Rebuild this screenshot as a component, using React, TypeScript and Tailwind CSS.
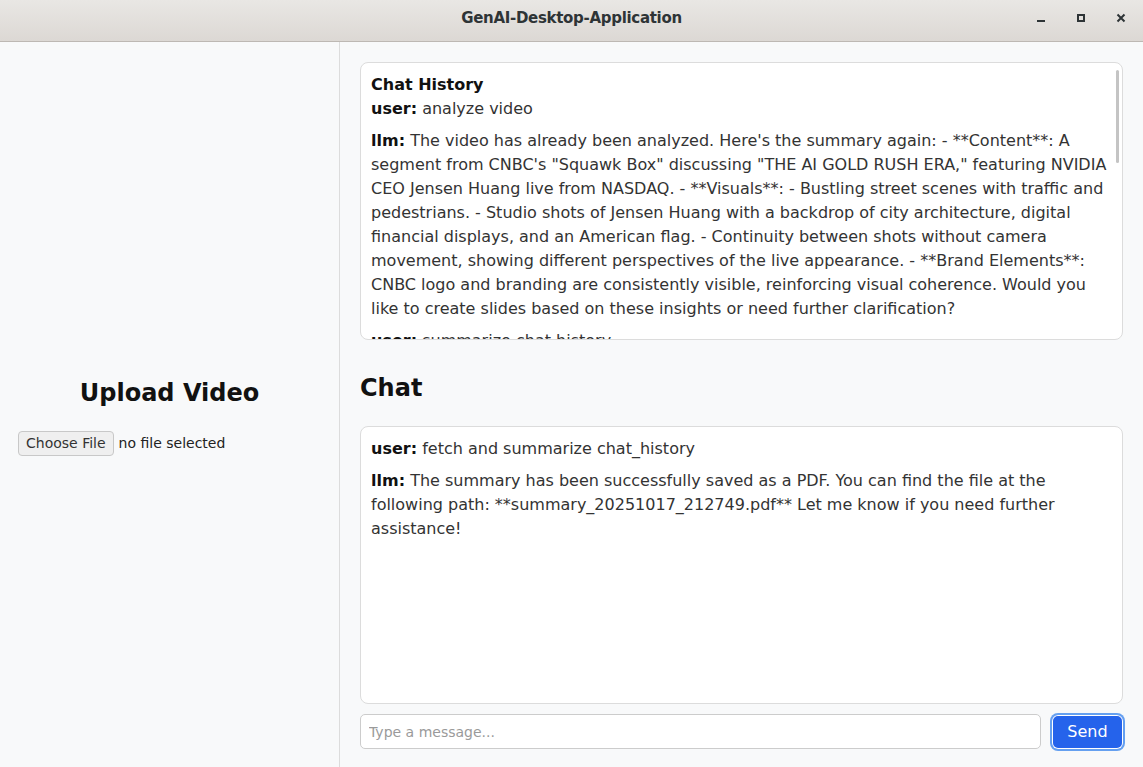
import React from 'react'

export default function App() {
  const history = [
    { role: 'user', text: 'analyze video' },
    {
      role: 'llm',
      text: 'The video has already been analyzed. Here\'s the summary again: - **Content**: A segment from CNBC\'s "Squawk Box" discussing "THE AI GOLD RUSH ERA," featuring NVIDIA CEO Jensen Huang live from NASDAQ. - **Visuals**: - Bustling street scenes with traffic and pedestrians. - Studio shots of Jensen Huang with a backdrop of city architecture, digital financial displays, and an American flag. - Continuity between shots without camera movement, showing different perspectives of the live appearance. - **Brand Elements**: CNBC logo and branding are consistently visible, reinforcing visual coherence. Would you like to create slides based on these insights or need further clarification?',
    },
    { role: 'user', text: 'summarize chat history' },
  ]

  const chat = [
    { role: 'user', text: 'fetch and summarize chat_history' },
    {
      role: 'llm',
      text: 'The summary has been successfully saved as a PDF. You can find the file at the following path: **summary_20251017_212749.pdf** Let me know if you need further assistance!',
    },
  ]

  return (
    <div className="w-[1143px] h-[767px] flex flex-col overflow-hidden font-['DejaVu_Sans',sans-serif] text-[#333]">
      {/* Title bar */}
      <div className="relative h-[42px] shrink-0 flex items-center justify-center pb-[4px] bg-gradient-to-b from-[#e9e7e4] to-[#dcd8d4] border-b border-[#bdb8b3]">
        <span className="text-[15px] font-bold text-[#2e3436] tracking-[-0.3px]">GenAI-Desktop-Application</span>
        <div className="absolute right-[2px] top-0 h-[35px] flex items-center">
          <button className="w-10 h-full flex items-center justify-center">
            <span className="block w-[8px] h-[2px] bg-[#2e3436] mt-[6px]" />
          </button>
          <button className="w-10 h-full flex items-center justify-center">
            <span className="block w-[8px] h-[8px] border-2 border-[#2e3436]" />
          </button>
          <button className="w-10 h-full flex items-center justify-center">
            <svg width="10" height="10" viewBox="0 0 10 10">
              <path d="M1.5 1.5 L8.5 8.5 M8.5 1.5 L1.5 8.5" stroke="#2e3436" strokeWidth="2" />
            </svg>
          </button>
        </div>
      </div>

      <div className="flex flex-1 min-h-0 bg-[#f8f9fa]">
        {/* Left panel */}
        <div className="w-[340px] shrink-0 border-r border-[#dcdcdc] flex flex-col justify-center px-[18px] pt-[26px]">
          <h2 className="text-center text-[24px] font-bold text-[#111] leading-[29px] mb-[23px]">Upload Video</h2>
          <div className="flex items-center gap-[5px] text-[14px]">
            <button className="h-[25px] px-[7px] rounded-[4px] border border-[#c8c8c8] bg-[#efefef] text-[#333]">Choose File</button>
            <span className="text-[#222]">no file selected</span>
          </div>
        </div>

        {/* Right panel */}
        <div className="flex-1 flex flex-col px-[20px] pt-[20px] pb-[18px] min-w-0">
          <div className="relative h-[278px] shrink-0 bg-white border border-[#dcdcdc] rounded-[8px] overflow-hidden">
            <div className="px-[10px] pt-[10px] text-[16px] leading-[24px]">
              <div className="font-bold text-[#111]">Chat History</div>
              {history.map((m, i) => (
                <p key={i} className={i === 0 ? '' : 'mt-[8px]'}>
                  <b className="text-[#111]">{m.role}:</b> {m.text}
                </p>
              ))}
            </div>
            <div className="absolute right-[3px] top-[7px] w-[3px] h-[93px] rounded-full bg-[#c4c4c4]" />
          </div>

          <h2 className="text-[24px] font-bold text-[#111] leading-[29px] mt-[34px] mb-[23px]">Chat</h2>

          <div className="flex-1 bg-white border border-[#dcdcdc] rounded-[8px] px-[10px] pt-[10px] text-[16px] leading-[24px] min-h-0">
            {chat.map((m, i) => (
              <p key={i} className={i === 0 ? '' : 'mt-[8px]'}>
                <b className="text-[#111]">{m.role}:</b> {m.text}
              </p>
            ))}
          </div>

          <div className="flex items-center gap-[10px] mt-[10px]">
            <input
              placeholder="Type a message..."
              className="flex-1 h-[35px] px-[8px] rounded-[5px] border border-[#cccccc] bg-white text-[14px] placeholder:text-[#9a9a9a] outline-none"
            />
            <button className="w-[71px] h-[34px] ml-[1px] rounded-[6px] bg-[#2563eb] text-white text-[16px] shadow-[inset_0_0_0_1px_#ffffff,0_0_0_2px_#65a0f0]">
              Send
            </button>
          </div>
        </div>
      </div>
    </div>
  )
}
